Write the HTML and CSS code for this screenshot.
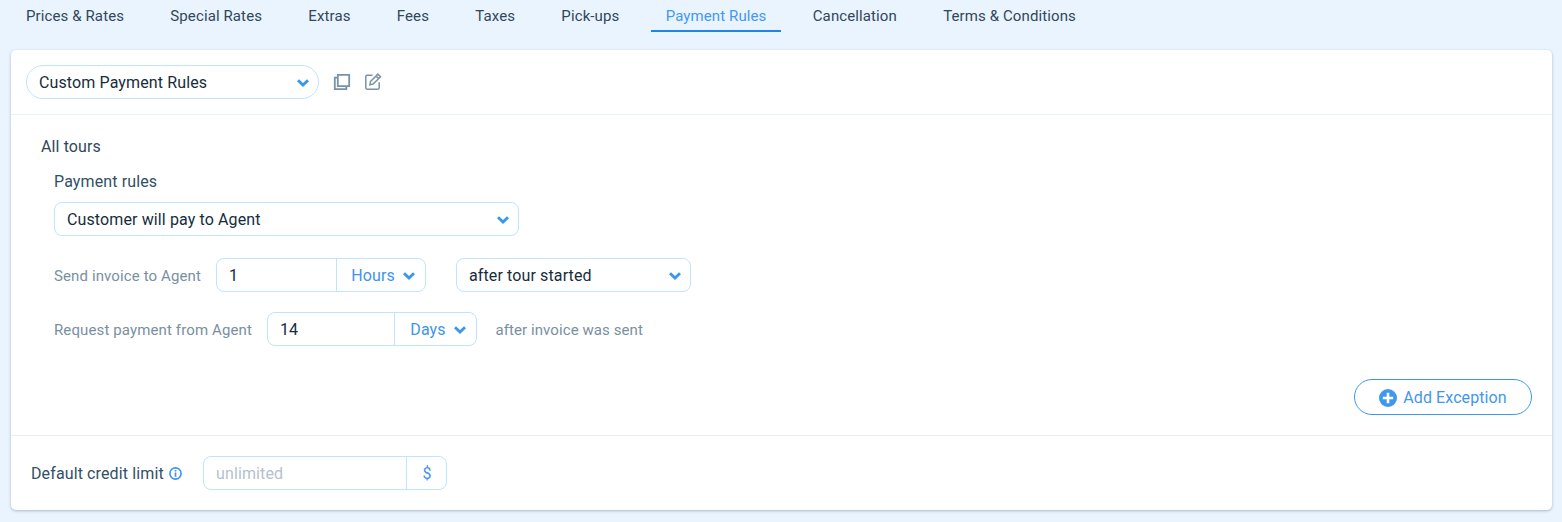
FILE: index.html
```html
<!DOCTYPE html>
<html lang="en">
<head>
<meta charset="utf-8">
<title>Payment Rules</title>
<link rel="stylesheet" href="styles.css">
</head>
<body>
<svg class="defs" width="0" height="0">
  <symbol id="chevron" viewBox="0 0 12 8"><path d="M1 1.3 6 6l5-4.7" fill="none" stroke="currentColor" stroke-width="2.9"/></symbol>
</svg>
<nav class="tabs">
  <a class="tab">Prices &amp; Rates</a>
  <a class="tab">Special Rates</a>
  <a class="tab">Extras</a>
  <a class="tab">Fees</a>
  <a class="tab">Taxes</a>
  <a class="tab">Pick-ups</a>
  <a class="tab active">Payment Rules</a>
  <a class="tab">Cancellation</a>
  <a class="tab">Terms &amp; Conditions</a>
</nav>
<main class="card">
  <header class="card-head">
    <div class="select pill"><span>Custom Payment Rules</span><svg class="chevron"><use href="#chevron"/></svg></div>
    <svg class="tool copy" viewBox="0 0 18 18"><path d="M4.8 1.8h11.4v11.4H4.8zM4.5 4.7H1.8v11.5h11.5v-2.7" fill="none" stroke="currentColor" stroke-width="1.8"/></svg>
    <svg class="tool edit" viewBox="0 0 18 18"><path d="M8.5 2.2H3.2A1.4 1.4 0 0 0 1.8 3.6v11.2a1.4 1.4 0 0 0 1.4 1.4h10.6a1.4 1.4 0 0 0 1.4-1.4V9.2M6.5 8.5l7.4-7.4 2.6 2.6-7.4 7.4-3.2.6zM12 3l2.6 2.6" fill="none" stroke="currentColor" stroke-width="1.5"/></svg>
  </header>
  <section class="card-body">
    <h2 class="title">All tours</h2>
    <div class="rules">
      <label class="label">Payment rules</label>
      <div class="select wide"><span>Customer will pay to Agent</span><svg class="chevron"><use href="#chevron"/></svg></div>
      <div class="row">
        <span class="hint send">Send invoice to Agent</span>
        <div class="group hours"><span class="value">1</span><span class="unit"><span>Hours</span><svg class="chevron"><use href="#chevron"/></svg></span></div>
        <div class="select moment"><span>after tour started</span><svg class="chevron"><use href="#chevron"/></svg></div>
      </div>
      <div class="row">
        <span class="hint request">Request payment from Agent</span>
        <div class="group days"><span class="value">14</span><span class="unit"><span>Days</span><svg class="chevron"><use href="#chevron"/></svg></span></div>
        <span class="hint after">after invoice was sent</span>
      </div>
    </div>
    <button class="add"><svg class="plus" viewBox="0 0 18 18"><circle cx="9" cy="9" r="9" fill="currentColor"/><path d="M9 3.8v10.4M3.8 9h10.4" stroke="#fff" stroke-width="2.6"/></svg><span>Add Exception</span></button>
  </section>
  <footer class="card-foot">
    <span class="label limit">Default credit limit</span>
    <svg class="info" viewBox="0 0 13 13"><circle cx="6.5" cy="6.5" r="5.6" fill="none" stroke="currentColor" stroke-width="1.6"/><path d="M6.5 5.6v4.2M6.5 3.1v1.5" stroke="currentColor" stroke-width="1.7"/></svg>
    <div class="group credit"><span class="value placeholder">unlimited</span><span class="unit"><span>$</span></span></div>
  </footer>
</main>
</body>
</html>
```
FILE: styles.css
```css
* { box-sizing: border-box; }
body { margin: 0; height: 522px; overflow: hidden; background: #e9f4ff; font: 16px/20px Roboto, sans-serif; letter-spacing: 0.12px; color: #162d3d; }
.defs { display: block; }
.tabs { display: flex; gap: 16.25px; height: 32px; padding-left: 11px; }
.tab { height: 32px; padding: 0 15px; border-bottom: 2px solid transparent; font-size: 15px; line-height: 32px; letter-spacing: 0.11px; white-space: nowrap; color: #32475a; }
.tab.active { color: #4498f0; border-bottom-color: #1d86e8; }
.card { display: flex; flex-direction: column; width: 1541px; height: 460px; margin: 18px 0 0 11px; background: #fff; border-radius: 5px; box-shadow: 0 1px 3px rgba(22, 45, 61, 0.3); }
.card-head { display: flex; align-items: center; height: 65px; padding-left: 15px; border-bottom: 1px solid #eaf3f5; }
.select, .group { display: flex; align-items: center; height: 34px; border: 1px solid #c1e4fe; border-radius: 8px; background: #fff; white-space: nowrap; }
.select { justify-content: space-between; padding: 0 9px 0 12px; }
.select > span, .unit > span, .add > span, .limit { padding-top: 2px; }
.pill { width: 293px; border-radius: 17px; }
.chevron { width: 12px; height: 8px; margin-top: 1px; color: #3899ec; }
.tool { width: 18px; height: 18px; color: #7a92a5; }
.copy { margin-left: 14px; }
.edit { margin-left: 13px; }
.card-body { display: flex; flex-direction: column; height: 321px; padding: 22px 20px 20px 30px; border-bottom: 1px solid #e9edf0; }
.title { margin: 0; font-size: 16px; font-weight: 400; color: #32475a; }
.rules { padding: 15px 0 0 13px; }
.label { display: block; color: #325066; }
.wide { width: 465px; margin-top: 10px; }
.row { display: flex; align-items: center; height: 34px; margin-top: 20px; }
.wide + .row { margin-top: 22px; }
.hint { padding-top: 2px; font-size: 15px; letter-spacing: 0.12px; color: #7a8fa2; white-space: nowrap; }
.send { width: 162px; }
.request { width: 213px; }
.after { margin-left: 18.5px; letter-spacing: 0.08px; }
.value { display: flex; align-items: center; flex: 1; height: 100%; padding: 2px 0 0 12px; }
.unit { display: flex; align-items: center; justify-content: center; height: 100%; border-left: 1px solid #c1e4fe; color: #4094ee; gap: 8px; }
.hours { width: 210px; }
.hours .unit { width: 89px; padding-left: 4px; }
.days { width: 210px; }
.days .unit { width: 82px; padding-left: 5px; }
.moment { width: 235px; margin-left: 30px; }
.add { display: flex; align-items: center; justify-content: center; align-self: flex-end; width: 178px; height: 36px; margin-top: auto; padding: 0; gap: 6px; border: 1px solid #3899ec; border-radius: 18px; background: #fff; color: #3f97ee; font: 16px/20px Roboto, sans-serif; letter-spacing: 0.1px; }
.plus { width: 18px; height: 18px; margin-top: 1px; }
.card-foot { display: flex; align-items: center; height: 74px; padding-left: 20px; }
.limit { width: 138px; }
.info { width: 13px; height: 13px; color: #3f94ee; }
.credit { width: 244px; margin-left: 21px; }
.credit .unit { width: 40px; padding-left: 1px; }
.placeholder { color: #b6c1cd; }
```
